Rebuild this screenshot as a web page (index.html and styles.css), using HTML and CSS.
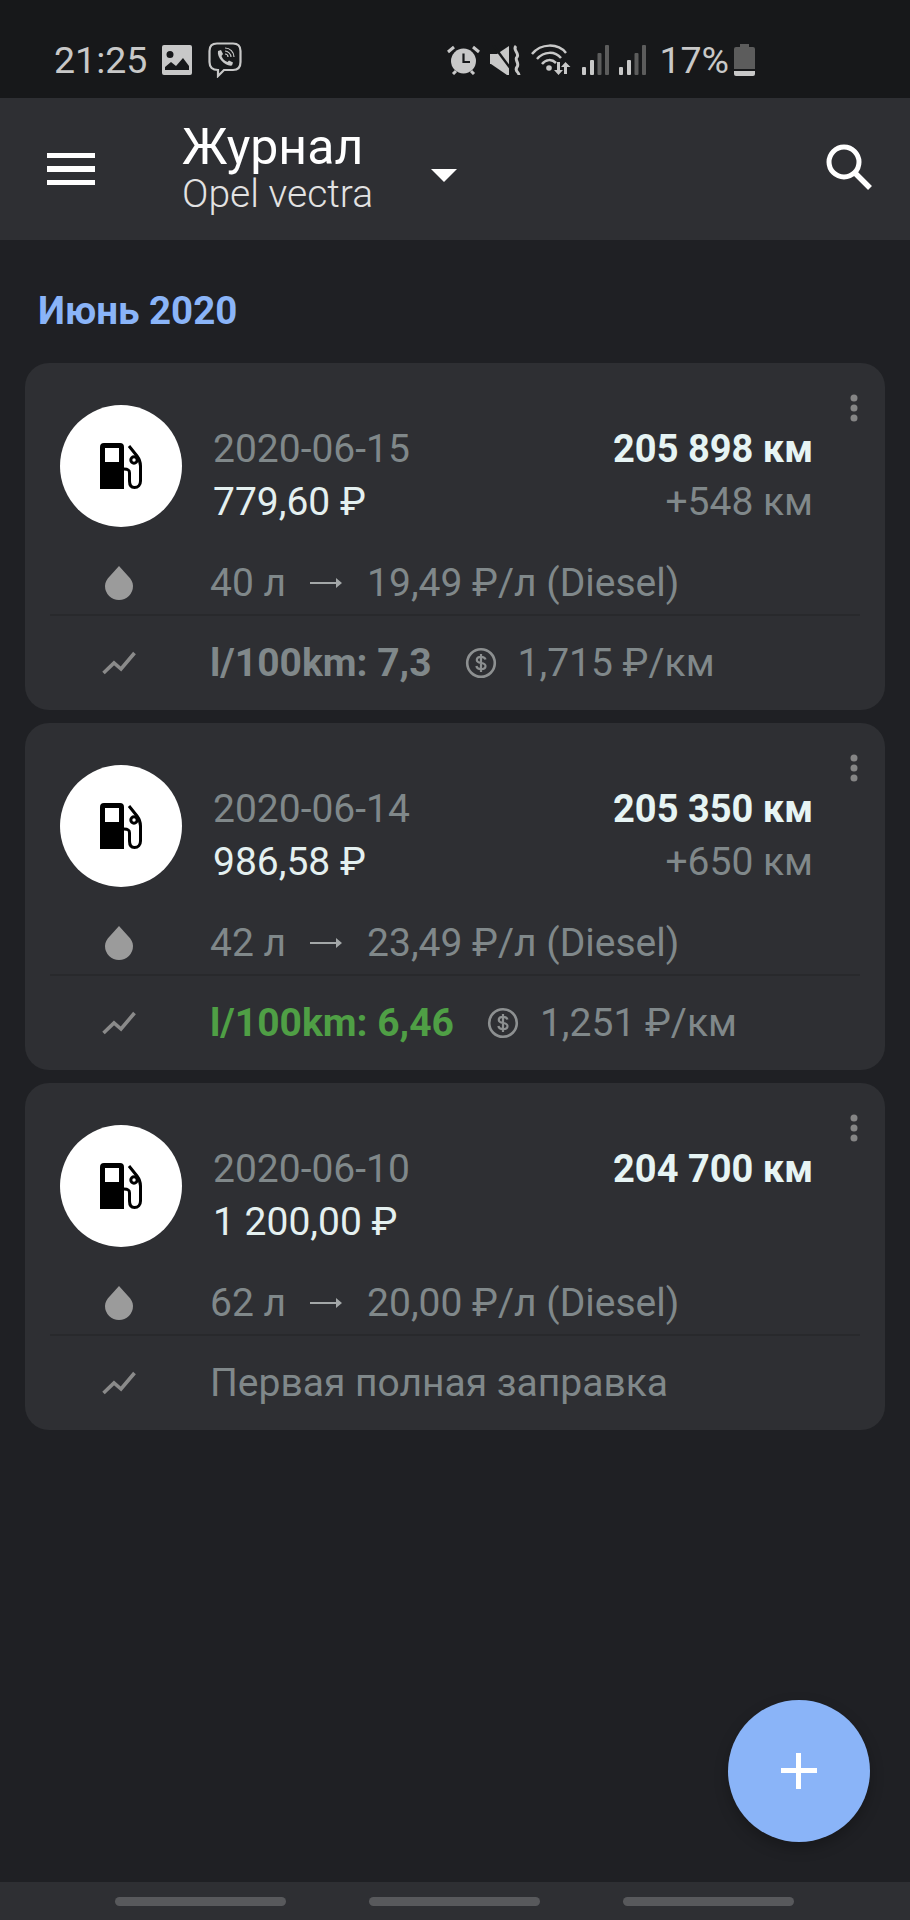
FILE: index.html
```html
<!DOCTYPE html>
<html>
<head>
    <title>Журнал</title>
    <meta name="viewport" content="width=device-width, initial-scale=1.0">
    <link rel="stylesheet" href="styles.css">
</head>
<body>
    <svg class="defs" width="0" height="0">
      <symbol id="pump" viewBox="0 0 42 46">
        <path fill="#000" fill-rule="evenodd" d="M0 46V4Q0 0 4 0H20Q24 0 24 4V46ZM5 5V19H19V5Z"/>
        <path fill="none" stroke="#000" stroke-width="3" d="M29 3L37 13C40 17 40.500 19 40.500 23V38C40.500 42 38 44.500 34.500 44.500S29.500 42 29.500 38V30C29.500 27 28 26 24 26"/>
        <circle cx="34" cy="17" r="3.200" fill="none" stroke="#000" stroke-width="3"/>
      </symbol>
      <symbol id="drop" viewBox="0 0 28 34">
        <path fill="#9b9b9b" d="M14 0L23 10C26 13 28 16 28 20A14 14 0 0 1 0 20C0 16 2 13 5 10Z"/>
      </symbol>
      <symbol id="trend" viewBox="0 0 34 24">
        <path fill="none" stroke="#8a8a8a" stroke-width="3.600" d="M1.500 22L12 12L19 18L32.500 2"/>
      </symbol>
      <symbol id="coin" viewBox="0 0 32 32">
        <circle cx="16" cy="16" r="13.800" fill="none" stroke="#8d9091" stroke-width="2.600"/>
        <path fill="none" stroke="#8d9091" stroke-width="2.200" d="M20.500 12.500C20 10.500 18 9.800 16 9.800C13.500 9.800 11.800 11 11.800 13C11.800 17.500 20.500 14.500 20.500 19C20.500 21 18.500 22.200 16 22.200C13.500 22.200 11.800 21 11.300 19M16 7V25"/>
      </symbol>
      <symbol id="dots" viewBox="0 0 8 28">
        <circle cx="4" cy="4" r="3.500" fill="#858585"/>
        <circle cx="4" cy="14" r="3.500" fill="#858585"/>
        <circle cx="4" cy="24" r="3.500" fill="#858585"/>
      </symbol>
      <symbol id="arrow" viewBox="0 0 32 12">
        <path fill="#a3a7a8" d="M0 5H26V1L32 6L26 11V7H0Z"/>
      </symbol>
      <symbol id="bars" viewBox="0 0 27 30">
        <rect x="0" y="22" width="4" height="8" rx="1" fill="#c8c8c8"/>
        <rect x="8" y="15" width="4" height="15" rx="1" fill="#c8c8c8"/>
        <rect x="15.500" y="8" width="4" height="22" rx="1" fill="#5c5c5c"/>
        <rect x="23" y="0" width="4" height="30" rx="1" fill="#5c5c5c"/>
      </symbol>
    </svg>

    <div class="status">
      <span class="clock">21:25</span>
      <svg class="st-img" viewBox="0 0 30 30" width="30" height="30">
        <path fill="#c8c8c8" fill-rule="evenodd" d="M2 0H28Q30 0 30 2V28Q30 30 28 30H2Q0 30 0 28V2Q0 0 2 0ZM8 6A3.500 3.500 0 1 0 8 13A3.500 3.500 0 1 0 8 6ZM3 25H27V21L21 13L14 21L9 17L3 22Z"/>
      </svg>
      <svg class="st-viber" viewBox="0 0 34 36" width="34" height="36">
        <path fill="none" stroke="#c8c8c8" stroke-width="2.200" d="M9 1.500H25Q32.500 1.500 32.500 9V20Q32.500 28 25 28H16L10 34V28Q1.500 28 1.500 20V9Q1.500 1.500 9 1.500Z"/>
        <path fill="#c8c8c8" d="M10 9L13 8L15 12L13.500 14C14.500 17 16.500 19 19.500 20L21 18.500L25 20.500L24 23.500C18 25 8.500 16 10 9Z"/>
        <path fill="none" stroke="#c8c8c8" stroke-width="1.200" d="M17 6C22 6 26 10 26 15M17 9C20 9 23 12 23 15M17 12C19 12 20 13 20 15"/>
      </svg>

      <div class="status-right">
        <svg viewBox="0 0 33 30" width="33" height="30">
          <circle cx="16.500" cy="16" r="12.500" fill="#c8c8c8"/>
          <path fill="none" stroke="#17181a" stroke-width="2.200" d="M16.500 8.500V17H23"/>
          <path fill="none" stroke="#c8c8c8" stroke-width="3" d="M1 7L7 2M32 7L26 2M6 29L9 26M27 29L24 26"/>
        </svg>
        <svg viewBox="0 0 31 30" width="31" height="30">
          <path fill="#c8c8c8" d="M0 9H7L19 1V30L17 30L1 19H0Z"/>
          <path fill="none" stroke="#17181a" stroke-width="2.400" d="M3 0L24 28"/>
          <path fill="none" stroke="#c8c8c8" stroke-width="3" d="M26 1C22 5 30 8 27 12C24 15 30 18 27 22C24 26 29 27 29 30"/>
        </svg>
        <svg viewBox="0 0 41 32" width="41" height="32">
          <path fill="none" stroke="#c8c8c8" stroke-width="2.500" d="M1 10C10 -1 27 -1 35 9M6 15C13 7 24 7 30 14M11 20C15 15 21 15 25 19"/>
          <circle cx="18" cy="24" r="2.800" fill="#c8c8c8"/>
          <path fill="#c8c8c8" d="M26 18H29V26H32L27.500 31L23 26H26ZM36 30H33V23H30L34.500 18L39.500 23H36Z"/>
        </svg>
        <svg class="st-bars" width="27" height="30"><use href="#bars"/></svg>
        <svg class="st-bars" width="27" height="30"><use href="#bars"/></svg>
        <span class="percent">17%</span>
        <svg class="st-batt" viewBox="0 0 21 32" width="21" height="32">
          <path fill="#5c5c5c" d="M6 0H15V3H19Q21 3 21 5V25H0V5Q0 3 2 3H6Z"/>
          <path fill="#c8c8c8" d="M0 27H21V30Q21 32 19 32H2Q0 32 0 30Z"/>
        </svg>
      </div>
    </div>

    <header class="appbar">
      <div class="burger"><i></i><i></i><i></i></div>
      <div class="titles">
        <div class="title">Журнал</div>
        <div class="subtitle">Opel vectra</div>
      </div>
      <div class="caret"></div>
      <svg class="search" viewBox="0 0 46 46" width="46" height="46">
        <circle cx="18" cy="18" r="15" fill="none" stroke="#fff" stroke-width="5"/>
        <path fill="none" stroke="#fff" stroke-width="5.500" d="M29 29L44 44"/>
      </svg>
    </header>

    <main class="list">
      <h2 class="month">Июнь 2020</h2>

      <div class="card">
        <svg class="more" width="8" height="28"><use href="#dots"/></svg>
        <div class="top">
          <div class="avatar"><svg width="42" height="46"><use href="#pump"/></svg></div>
          <div class="col grow">
            <div class="muted">2020-06-15</div>
            <div class="amount">779,60 ₽</div>
          </div>
          <div class="col right">
            <div class="km">205 898 км</div>
            <div class="muted">+548 км</div>
          </div>
        </div>
        <div class="row">
          <div class="ico"><svg width="28" height="34"><use href="#drop"/></svg></div>
          <span>40 л</span><svg class="arr" width="32" height="12"><use href="#arrow"/></svg><span>19,49 ₽/л (Diesel)</span>
        </div>
        <div class="row line">
          <div class="ico"><svg width="34" height="24"><use href="#trend"/></svg></div>
          <b>l/100km: 7,3</b><svg class="cn" width="32" height="32"><use href="#coin"/></svg><span>1,715 ₽/км</span>
        </div>
      </div>

      <div class="card">
        <svg class="more" width="8" height="28"><use href="#dots"/></svg>
        <div class="top">
          <div class="avatar"><svg width="42" height="46"><use href="#pump"/></svg></div>
          <div class="col grow">
            <div class="muted">2020-06-14</div>
            <div class="amount">986,58 ₽</div>
          </div>
          <div class="col right">
            <div class="km">205 350 км</div>
            <div class="muted">+650 км</div>
          </div>
        </div>
        <div class="row">
          <div class="ico"><svg width="28" height="34"><use href="#drop"/></svg></div>
          <span>42 л</span><svg class="arr" width="32" height="12"><use href="#arrow"/></svg><span>23,49 ₽/л (Diesel)</span>
        </div>
        <div class="row line">
          <div class="ico"><svg width="34" height="24"><use href="#trend"/></svg></div>
          <b class="good">l/100km: 6,46</b><svg class="cn" width="32" height="32"><use href="#coin"/></svg><span>1,251 ₽/км</span>
        </div>
      </div>

      <div class="card">
        <svg class="more" width="8" height="28"><use href="#dots"/></svg>
        <div class="top">
          <div class="avatar"><svg width="42" height="46"><use href="#pump"/></svg></div>
          <div class="col grow">
            <div class="muted">2020-06-10</div>
            <div class="amount">1 200,00 ₽</div>
          </div>
          <div class="col right">
            <div class="km">204 700 км</div>
          </div>
        </div>
        <div class="row">
          <div class="ico"><svg width="28" height="34"><use href="#drop"/></svg></div>
          <span>62 л</span><svg class="arr" width="32" height="12"><use href="#arrow"/></svg><span>20,00 ₽/л (Diesel)</span>
        </div>
        <div class="row line">
          <div class="ico"><svg width="34" height="24"><use href="#trend"/></svg></div>
          <span>Первая полная заправка</span>
        </div>
      </div>
    </main>

    <button class="fab"><i class="h"></i><i class="v"></i></button>

    <footer class="navbar"><i></i><i></i><i></i></footer>
</body>
</html>
```

FILE: styles.css
```css
* {
    box-sizing: border-box;
}
body {
    font-family: Roboto, "Noto Sans", sans-serif;
    margin: 0;
    padding: 0;
    width: 910px;
    height: 1920px;
    background-color: #1f2024;
    display: flex;
    flex-direction: column;
    position: relative;
    overflow: hidden;
}
.defs {
    position: absolute;
}
svg {
    display: block;
    flex: none;
}

.status {
    height: 98px;
    flex: none;
    background-color: #17181a;
    display: flex;
    align-items: center;
    padding: 22px 155px 0 54px;
    color: #c8c8c8;
    font-size: 37.500px;
}
.clock {
    margin-right: 15px;
}
.st-viber {
    margin-left: 16px;
}
.status-right {
    margin-left: auto;
    display: flex;
    align-items: center;
    gap: 10px;
}
.percent {
    margin-left: 3px;
    margin-right: -5px;
}

.appbar {
    height: 142px;
    flex: none;
    background-color: #2e2f33;
    display: flex;
    align-items: center;
    padding-left: 47px;
    color: white;
}
.burger {
    width: 48px;
    display: flex;
    flex-direction: column;
    gap: 8px;
    margin-right: 87px;
}
.burger i {
    display: block;
    height: 5.500px;
    background-color: white;
}
.titles {
    width: 249px;
}
.title {
    font-size: 50px;
    line-height: 50px;
}
.subtitle {
    font-size: 39px;
    font-weight: 300;
    line-height: 44px;
    color: #e2e2e2;
}
.caret {
    width: 0;
    height: 0;
    border-left: 13px solid transparent;
    border-right: 13px solid transparent;
    border-top: 13px solid white;
    margin-top: 12px;
}
.search {
    margin-left: auto;
    margin-right: 38px;
    margin-top: -4px;
}

.list {
    flex: 1;
    padding: 0 25px;
    display: flex;
    flex-direction: column;
    gap: 13px;
}
.month {
    margin: 0;
    padding: 48px 13px 0;
    height: 110px;
    color: #8ab4f8;
    font-size: 38.500px;
    font-weight: 700;
    line-height: 46px;
}

.card {
    height: 347px;
    background-color: #2e2f33;
    border-radius: 24px;
    position: relative;
    color: #80888a;
    font-size: 39px;
}
.more {
    position: absolute;
    right: 27px;
    top: 31px;
}
.top {
    display: flex;
    align-items: flex-start;
    height: 122px;
    margin: 42px 72px 0 35px;
}
.avatar {
    width: 122px;
    height: 122px;
    border-radius: 50%;
    background-color: white;
    display: flex;
    align-items: center;
    justify-content: center;
    margin-right: 31px;
}
.col {
    line-height: 53px;
    padding-top: 18px;
}
.grow {
    flex: 1;
}
.right {
    text-align: right;
}
.amount {
    color: #e4f0f0;
}
.km {
    color: #e6f4f4;
    font-weight: 700;
    font-size: 38px;
}

.row {
    display: flex;
    align-items: center;
    height: 66px;
    padding-top: 3px;
    margin: 21px 25px 0;
}
.row.line {
    height: 94px;
    margin-top: 0;
    padding-top: 2px;
    border-top: 2px solid #28292c;
}
.ico {
    width: 138px;
    margin-right: 22px;
    display: flex;
    justify-content: center;
}
.arr {
    margin: 0 25px 0 24px;
}
.row b {
    font-weight: 700;
}
.row b.good {
    color: #4f9f45;
}
.cn {
    margin: 0 21px 0 33px;
}

.fab {
    position: absolute;
    left: 728px;
    top: 1700px;
    width: 142px;
    height: 142px;
    border: none;
    border-radius: 50%;
    background-color: #8ab4f8;
    box-shadow: 0 6px 14px rgba(0,0,0,0.25);
}
.fab i {
    position: absolute;
    background-color: white;
}
.fab .h {
    left: 53px;
    top: 68px;
    width: 36px;
    height: 5px;
}
.fab .v {
    left: 68px;
    top: 53px;
    width: 5px;
    height: 36px;
}

.navbar {
    height: 38px;
    flex: none;
    background-color: #2e2f33;
    display: flex;
    align-items: center;
    padding-left: 115px;
    gap: 83px;
}
.navbar i {
    display: block;
    width: 171px;
    height: 9px;
    border-radius: 5px;
    background-color: #58595c;
}
```
